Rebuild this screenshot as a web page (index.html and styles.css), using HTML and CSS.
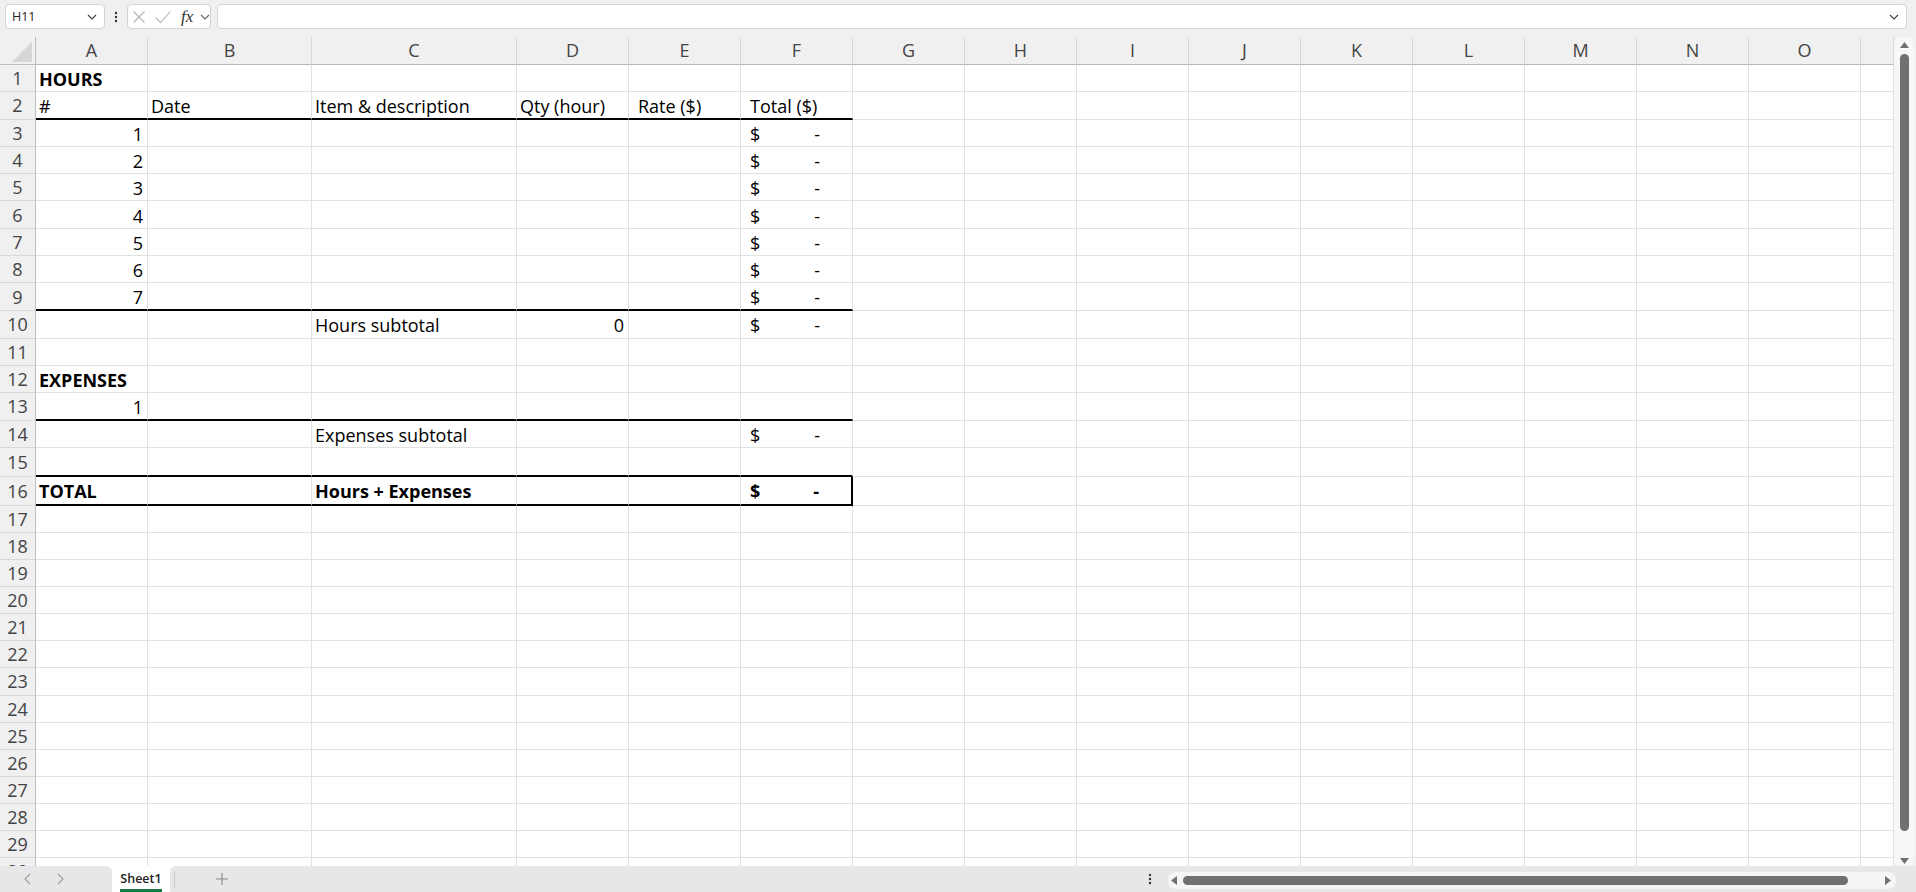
FILE: index.html
```html
<!DOCTYPE html>
<html lang="en">
<head>
<meta charset="utf-8">
<title>Sheet1</title>
<link rel="stylesheet" href="styles.css">
</head>
<body>
<div class="app">
  <header class="fbar">
    <div class="namebox"><span>H11</span><svg width="10" height="6" viewBox="0 0 10 6"><path d="M1 1l4 4 4-4" fill="none" stroke="#444" stroke-width="1.2"/></svg></div>
    <div class="more"><svg width="4" height="12" viewBox="0 0 4 12"><circle cx="2" cy="2" r="1.2" fill="#333"/><circle cx="2" cy="6" r="1.2" fill="#333"/><circle cx="2" cy="10" r="1.2" fill="#333"/></svg></div>
    <div class="fbtns">
      <svg class="ic-x" width="12" height="12" viewBox="0 0 12 12"><path d="M0.5 0.5l11 11M11.5 0.5l-11 11" stroke="#b4b4b4" stroke-width="1.1" fill="none"/></svg>
      <svg class="ic-ok" width="16" height="12" viewBox="0 0 16 12"><path d="M0.5 6.5l5 5 10-11" stroke="#b4b4b4" stroke-width="1.1" fill="none"/></svg>
      <span class="fx">fx</span>
      <svg class="ic-dd" width="10" height="6" viewBox="0 0 10 6"><path d="M1 1l4 4 4-4" fill="none" stroke="#666" stroke-width="1.1"/></svg>
    </div>
    <div class="finput"><svg width="10" height="6" viewBox="0 0 10 6"><path d="M1 1l4 4 4-4" fill="none" stroke="#444" stroke-width="1.2"/></svg></div>
  </header>

  <main class="main">
    <div class="sheet">
      <div class="grid">
        <span class="corner"><svg width="20" height="20" viewBox="0 0 20 20"><path d="M20 0V20H0Z" fill="#d6d6d6"/></svg></span><span class="ch">A</span><span class="ch">B</span><span class="ch">C</span><span class="ch">D</span><span class="ch">E</span><span class="ch">F</span><span class="ch">G</span><span class="ch">H</span><span class="ch">I</span><span class="ch">J</span><span class="ch">K</span><span class="ch">L</span><span class="ch">M</span><span class="ch">N</span><span class="ch">O</span><span class="ch"></span>

        <span class="rh">1</span><span class="b">HOURS</span><span></span><span></span><span></span><span></span><span></span><span></span><span></span><span></span><span></span><span></span><span></span><span></span><span></span><span></span><span></span>
        <span class="rh">2</span><span class="tb">#</span><span class="tb">Date</span><span class="tb">Item &amp; description</span><span class="tb">Qty (hour)</span><span class="tb ind">Rate ($)</span><span class="tb ind">Total ($)</span><span></span><span></span><span></span><span></span><span></span><span></span><span></span><span></span><span></span><span></span>
        <span class="rh">3</span><span class="num">1</span><span></span><span></span><span></span><span></span><span class="acc"><em>$</em><em>-</em></span><span></span><span></span><span></span><span></span><span></span><span></span><span></span><span></span><span></span><span></span>
        <span class="rh">4</span><span class="num">2</span><span></span><span></span><span></span><span></span><span class="acc"><em>$</em><em>-</em></span><span></span><span></span><span></span><span></span><span></span><span></span><span></span><span></span><span></span><span></span>
        <span class="rh">5</span><span class="num">3</span><span></span><span></span><span></span><span></span><span class="acc"><em>$</em><em>-</em></span><span></span><span></span><span></span><span></span><span></span><span></span><span></span><span></span><span></span><span></span>
        <span class="rh">6</span><span class="num">4</span><span></span><span></span><span></span><span></span><span class="acc"><em>$</em><em>-</em></span><span></span><span></span><span></span><span></span><span></span><span></span><span></span><span></span><span></span><span></span>
        <span class="rh">7</span><span class="num">5</span><span></span><span></span><span></span><span></span><span class="acc"><em>$</em><em>-</em></span><span></span><span></span><span></span><span></span><span></span><span></span><span></span><span></span><span></span><span></span>
        <span class="rh">8</span><span class="num">6</span><span></span><span></span><span></span><span></span><span class="acc"><em>$</em><em>-</em></span><span></span><span></span><span></span><span></span><span></span><span></span><span></span><span></span><span></span><span></span>
        <span class="rh">9</span><span class="num tb">7</span><span class="tb"></span><span class="tb"></span><span class="tb"></span><span class="tb"></span><span class="acc tb"><em>$</em><em>-</em></span><span></span><span></span><span></span><span></span><span></span><span></span><span></span><span></span><span></span><span></span>
        <span class="rh">10</span><span></span><span></span><span>Hours subtotal</span><span class="num">0</span><span></span><span class="acc"><em>$</em><em>-</em></span><span></span><span></span><span></span><span></span><span></span><span></span><span></span><span></span><span></span><span></span>
        <span class="rh">11</span><span></span><span></span><span></span><span></span><span></span><span></span><span></span><span></span><span></span><span></span><span></span><span></span><span></span><span></span><span></span><span></span>
        <span class="rh">12</span><span class="b">EXPENSES</span><span></span><span></span><span></span><span></span><span></span><span></span><span></span><span></span><span></span><span></span><span></span><span></span><span></span><span></span><span></span>
        <span class="rh">13</span><span class="num tb">1</span><span class="tb"></span><span class="tb"></span><span class="tb"></span><span class="tb"></span><span class="tb"></span><span></span><span></span><span></span><span></span><span></span><span></span><span></span><span></span><span></span><span></span>
        <span class="rh">14</span><span></span><span></span><span>Expenses subtotal</span><span></span><span></span><span class="acc"><em>$</em><em>-</em></span><span></span><span></span><span></span><span></span><span></span><span></span><span></span><span></span><span></span><span></span>
        <span class="rh">15</span><span class="tb"></span><span class="tb"></span><span class="tb"></span><span class="tb"></span><span class="tb"></span><span class="tb"></span><span></span><span></span><span></span><span></span><span></span><span></span><span></span><span></span><span></span><span></span>
        <span class="rh">16</span><span class="b tb">TOTAL</span><span class="tb"></span><span class="b tb">Hours + Expenses</span><span class="tb"></span><span class="tb"></span><span class="acc b tb tr"><em>$</em><em>-</em></span><span></span><span></span><span></span><span></span><span></span><span></span><span></span><span></span><span></span><span></span>
        <span class="rh">17</span><span></span><span></span><span></span><span></span><span></span><span></span><span></span><span></span><span></span><span></span><span></span><span></span><span></span><span></span><span></span><span></span>
        <span class="rh">18</span><span></span><span></span><span></span><span></span><span></span><span></span><span></span><span></span><span></span><span></span><span></span><span></span><span></span><span></span><span></span><span></span>
        <span class="rh">19</span><span></span><span></span><span></span><span></span><span></span><span></span><span></span><span></span><span></span><span></span><span></span><span></span><span></span><span></span><span></span><span></span>
        <span class="rh">20</span><span></span><span></span><span></span><span></span><span></span><span></span><span></span><span></span><span></span><span></span><span></span><span></span><span></span><span></span><span></span><span></span>
        <span class="rh">21</span><span></span><span></span><span></span><span></span><span></span><span></span><span></span><span></span><span></span><span></span><span></span><span></span><span></span><span></span><span></span><span></span>
        <span class="rh">22</span><span></span><span></span><span></span><span></span><span></span><span></span><span></span><span></span><span></span><span></span><span></span><span></span><span></span><span></span><span></span><span></span>
        <span class="rh">23</span><span></span><span></span><span></span><span></span><span></span><span></span><span></span><span></span><span></span><span></span><span></span><span></span><span></span><span></span><span></span><span></span>
        <span class="rh">24</span><span></span><span></span><span></span><span></span><span></span><span></span><span></span><span></span><span></span><span></span><span></span><span></span><span></span><span></span><span></span><span></span>
        <span class="rh">25</span><span></span><span></span><span></span><span></span><span></span><span></span><span></span><span></span><span></span><span></span><span></span><span></span><span></span><span></span><span></span><span></span>
        <span class="rh">26</span><span></span><span></span><span></span><span></span><span></span><span></span><span></span><span></span><span></span><span></span><span></span><span></span><span></span><span></span><span></span><span></span>
        <span class="rh">27</span><span></span><span></span><span></span><span></span><span></span><span></span><span></span><span></span><span></span><span></span><span></span><span></span><span></span><span></span><span></span><span></span>
        <span class="rh">28</span><span></span><span></span><span></span><span></span><span></span><span></span><span></span><span></span><span></span><span></span><span></span><span></span><span></span><span></span><span></span><span></span>
        <span class="rh">29</span><span></span><span></span><span></span><span></span><span></span><span></span><span></span><span></span><span></span><span></span><span></span><span></span><span></span><span></span><span></span><span></span>
        <span class="rh">30</span><span></span><span></span><span></span><span></span><span></span><span></span><span></span><span></span><span></span><span></span><span></span><span></span><span></span><span></span><span></span><span></span>
      </div>
    </div>
    <div class="vscroll">
      <div class="vtrack">
        <svg class="arr" width="9" height="6" viewBox="0 0 9 6"><path d="M4.5 0L9 6H0Z" fill="#707070"/></svg>
        <div class="vthumb"></div>
        <svg class="arr" width="9" height="6" viewBox="0 0 9 6"><path d="M0 0H9L4.5 6Z" fill="#707070"/></svg>
      </div>
    </div>
  </main>

  <footer class="tabs">
    <div class="nav">
      <svg class="nv1" width="7" height="12" viewBox="0 0 7 12"><path d="M6 1L1 6l5 5" fill="none" stroke="#9a9a9a" stroke-width="1.1"/></svg>
      <svg class="nv2" width="7" height="12" viewBox="0 0 7 12"><path d="M1 1l5 5-5 5" fill="none" stroke="#9a9a9a" stroke-width="1.1"/></svg>
    </div>
    <div class="tab"><span>Sheet1</span></div>
    <div class="rest">
      <span class="divider"></span>
      <svg class="plus" width="12" height="12" viewBox="0 0 12 12"><path d="M6 0v12M0 6h12" stroke="#8a8a8a" stroke-width="1.1"/></svg>
      <span class="spacer"></span>
      <svg class="more2" width="4" height="12" viewBox="0 0 4 12"><circle cx="2" cy="2" r="1.2" fill="#333"/><circle cx="2" cy="6" r="1.2" fill="#333"/><circle cx="2" cy="10" r="1.2" fill="#333"/></svg>
      <div class="htrack">
        <svg width="6" height="9" viewBox="0 0 6 9"><path d="M0 4.5L6 0V9Z" fill="#707070"/></svg>
        <div class="hthumb"></div>
        <span class="spacer"></span>
        <svg width="6" height="9" viewBox="0 0 6 9"><path d="M6 4.5L0 0V9Z" fill="#707070"/></svg>
      </div>
    </div>
  </footer>
</div>
</body>
</html>
```

FILE: styles.css
```css
* { box-sizing: border-box; margin: 0; padding: 0; }
html, body { width: 1916px; height: 892px; overflow: hidden; background: #fff; }
body { font-family: "Open Sans", "Noto Sans", sans-serif; color: #000; }

.app { display: flex; flex-direction: column; height: 892px; }

/* formula bar */
.fbar { flex: none; height: 37px; background: #f0f0f0; display: flex; align-items: flex-start; padding: 4px 9px 0 5px; }
.namebox { width: 100px; height: 25px; background: #fff; border: 1px solid #d4d4d4; border-radius: 4px; display: flex; align-items: center; justify-content: space-between; padding: 0 7px 0 6px; font-size: 12.5px; color: #222; }
.more { width: 22px; height: 25px; display: flex; align-items: center; justify-content: center; }
.fbtns { width: 84px; height: 25px; background: #fff; border: 1px solid #d4d4d4; border-radius: 4px; display: flex; align-items: center; padding-left: 5px; }
.ic-ok { margin-left: 10px; }
.fx { margin-left: 10px; font-family: "Liberation Serif", serif; font-style: italic; font-size: 17px; color: #333; line-height: 1; width: 14px; }
.ic-dd { margin-left: 5px; }
.finput { flex: 1; margin-left: 6px; height: 25px; background: #fff; border: 1px solid #d4d4d4; border-radius: 4px; display: flex; align-items: center; justify-content: flex-end; padding-right: 7px; }

/* main */
.main { flex: none; height: 829px; display: flex; }
.sheet { flex: 1; overflow: hidden; background: #fff; }
.grid {
  display: grid;
  grid-template-columns: 36px 112px 164px 205px repeat(12, 112px) 1fr;
  grid-template-rows: 27.5px 27.5px 27.5px repeat(6, 27.3px) 28px 27.3px 27px 27px 28.3px 27.3px 28.7px 29px;
  grid-auto-rows: 27.1px;
}
.grid > span { display: flex; align-items: center; padding: 2px 3px 0 3px; border-right: 1px solid #e1e1e1; border-bottom: 1px solid #e1e1e1; font-size: 18px; white-space: nowrap; min-width: 0; }
.grid > .corner { background: #f0f0f0; border-right: 1px solid #bdbdbd; border-bottom: 1px solid #bdbdbd; padding: 5px 3px 2px 12px; align-items: flex-end; }
.grid > .ch { background: #f0f0f0; justify-content: center; color: #444; font-size: 18px; border-right: 1px solid #d9d9d9; border-bottom: 1px solid #b8b8b8; padding: 0; }
.grid > .rh { background: #f0f0f0; justify-content: center; color: #444; font-size: 18px; border-right: 1px solid #bdbdbd; border-bottom: 1px solid #d9d9d9; padding: 0; }
.grid > .b { font-weight: 700; }
.grid > .num { justify-content: flex-end; padding-right: 4px; }
.grid > .ind { padding-left: 9px; }
.grid > .tb { border-bottom: 2px solid #000; }
.grid > .tr { border-right: 2px solid #000; }
.grid > .acc { justify-content: space-between; padding-left: 9px; padding-right: 32px; }
.acc em { font-style: normal; }

/* vertical scroll */
.vscroll { flex: none; width: 22px; background: #f0f0f0; padding: 0 2px 0 0; }
.vtrack { height: 831px; background: #f7f7f7; border-radius: 8px; display: flex; flex-direction: column; align-items: center; padding: 5px 0 4px; }
.vthumb { width: 9px; height: 779px; margin: 6px 0 27px; background: #707070; border-radius: 5px; }

/* bottom tabs */
.tabs { flex: none; height: 26px; display: flex; background: #fff; }
.nav { width: 112px; background: #e7e7ea; border-top-right-radius: 6px; display: flex; align-items: center; padding-left: 24px; }
.nv2 { margin-left: 26px; }
.tab { width: 58px; background: #fff; display: flex; justify-content: center; }
.tab span { font-size: 12.5px; font-weight: 600; color: #222; padding-top: 4px; border-bottom: 3px solid #107c41; height: 26px; line-height: 18px; }
.rest { flex: 1; background: #e7e7ea; border-top-left-radius: 6px; display: flex; align-items: center; padding-left: 4px; }
.divider { width: 1px; height: 17px; background: #c8c8cc; }
.plus { margin-left: 41px; }
.spacer { flex: 1; }
.more2 { margin-right: 16px; }
.htrack { width: 728px; height: 17px; margin-right: 20px; margin-top: 2px; background: #f5f5f5; border-radius: 8px; display: flex; align-items: center; padding: 0 5px 0 3px; }
.hthumb { width: 665px; height: 9px; margin-left: 6px; background: #707070; border-radius: 5px; }
```
